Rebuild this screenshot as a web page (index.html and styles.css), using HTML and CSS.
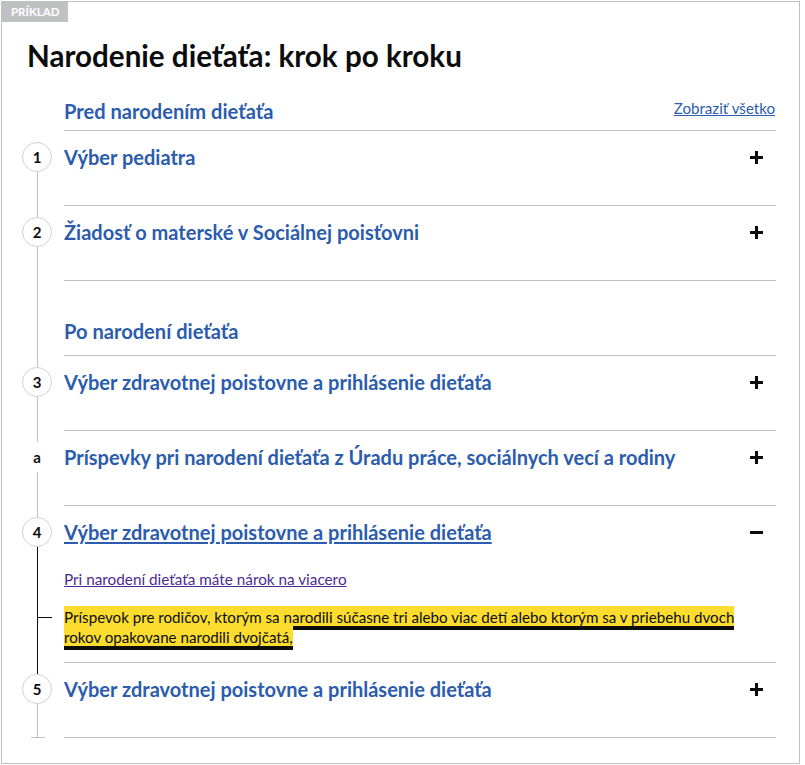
FILE: index.html
```html
<!DOCTYPE html>
<html lang="sk">
<head>
<meta charset="utf-8">
<title>Narodenie dieťaťa: krok po kroku</title>
<link rel="stylesheet" href="styles.css">
</head>
<body>
<div class="example">
  <span class="tag">Príklad</span>
  <h1 class="title">Narodenie dieťaťa: krok po kroku</h1>
  <div class="sbs">
    <div class="row head head-first">
      <div class="rail rail-none"></div>
      <div class="body head-body">
        <h2 class="head-title">Pred narodením dieťaťa</h2>
        <a class="show-all" href="#">Zobraziť všetko</a>
      </div>
    </div>

    <div class="row step">
      <div class="rail rail-start"><span class="marker">1</span></div>
      <div class="body step-body">
        <span class="step-title">Výber pediatra</span>
        <svg class="icon" width="13" height="13" viewBox="0 0 13 13"><rect x="5" y="0" width="3" height="13"/><rect x="0" y="5" width="13" height="3"/></svg>
      </div>
    </div>

    <div class="row step">
      <div class="rail"><span class="marker">2</span></div>
      <div class="body step-body">
        <span class="step-title">Žiadosť o materské v Sociálnej poisťovni</span>
        <svg class="icon" width="13" height="13" viewBox="0 0 13 13"><rect x="5" y="0" width="3" height="13"/><rect x="0" y="5" width="13" height="3"/></svg>
      </div>
    </div>

    <div class="row head">
      <div class="rail rail-full"></div>
      <div class="body head-body head-second">
        <h2 class="head-title">Po narodení dieťaťa</h2>
      </div>
    </div>

    <div class="row step">
      <div class="rail"><span class="marker">3</span></div>
      <div class="body step-body">
        <span class="step-title">Výber zdravotnej poistovne a prihlásenie dieťaťa</span>
        <svg class="icon" width="13" height="13" viewBox="0 0 13 13"><rect x="5" y="0" width="3" height="13"/><rect x="0" y="5" width="13" height="3"/></svg>
      </div>
    </div>

    <div class="row step">
      <div class="rail"><span class="marker marker-plain">a</span></div>
      <div class="body step-body">
        <span class="step-title">Príspevky pri narodení dieťaťa z Úradu práce, sociálnych vecí a rodiny</span>
        <svg class="icon" width="13" height="13" viewBox="0 0 13 13"><rect x="5" y="0" width="3" height="13"/><rect x="0" y="5" width="13" height="3"/></svg>
      </div>
    </div>

    <div class="row step step-open">
      <div class="rail rail-active-below"><span class="marker">4</span></div>
      <div class="body open-body">
        <div class="step-head">
          <a class="step-title step-title-link" href="#">Výber zdravotnej poistovne a prihlásenie dieťaťa</a>
          <svg class="icon" width="13" height="13" viewBox="0 0 13 13"><rect x="0" y="5" width="13" height="3"/></svg>
        </div>
        <a class="visited-link" href="#">Pri narodení dieťaťa máte nárok na viacero</a>
        <p class="para"><a class="focus-link" href="#">Príspevok pre rodičov, ktorým sa narodili súčasne tri alebo viac detí alebo ktorým sa v priebehu dvoch<br>rokov opakovane narodili dvojčatá,</a></p>
      </div>
    </div>

    <div class="row step step-last">
      <div class="rail rail-active-above rail-end"><span class="marker">5</span><span class="tick"></span></div>
      <div class="body step-body body-last">
        <span class="step-title">Výber zdravotnej poistovne a prihlásenie dieťaťa</span>
        <svg class="icon" width="13" height="13" viewBox="0 0 13 13"><rect x="5" y="0" width="3" height="13"/><rect x="0" y="5" width="13" height="3"/></svg>
      </div>
    </div>
  </div>
</div>
</body>
</html>
```
FILE: styles.css
```css
* { box-sizing: border-box; }

body {
  margin: 0;
  font-family: Lato, "Liberation Sans", sans-serif;
  color: #0b0c0c;
  background: #fff;
}

.example {
  margin: 1px 0 0 1px;
  width: 799px;
  height: 763px;
  border: 1px solid #bfc1c3;
}

.tag {
  display: inline-block;
  vertical-align: top;
  background: #bfc1c3;
  color: #fff;
  font-weight: 700;
  font-size: 11.5px;
  line-height: 20px;
  padding: 0 8px 0 9px;
  text-transform: uppercase;
}

.title {
  margin: 16px 0 0 25px;
  font-size: 29.6px;
  line-height: 36px;
  font-weight: 700;
}

.sbs {
  margin: 0 23px 0 20px;
}

.row {
  display: grid;
  grid-template-columns: 42px 1fr;
}

.body {
  border-top: 1px solid #bfc1c3;
}

.head-first .body {
  border-top: 0;
}

.head-body {
  display: flex;
  justify-content: space-between;
  align-items: flex-end;
  padding: 24px 0 7px;
}

.head-second {
  padding: 38px 0 12px;
}

.head-title {
  margin: 0;
  font-size: 20.1px;
  line-height: 24px;
  font-weight: 700;
  color: #2b5cad;
}

.show-all {
  font-size: 15.1px;
  line-height: 20px;
  color: #2b5cad;
  text-decoration: underline;
  margin-bottom: 5px;
  margin-right: 1px;
}

.step-body,
.step-head {
  display: flex;
  align-items: center;
  justify-content: space-between;
}

.step-body {
  padding: 14px 0 36px;
}

.open-body {
  padding: 14px 0 15px;
}

.body-last {
  border-bottom: 1px solid #bfc1c3;
}

.step-title {
  font-size: 20px;
  line-height: 24px;
  font-weight: 700;
  color: #2b5cad;
}

.step-title-link {
  text-decoration: underline;
  text-decoration-thickness: 2px;
  text-underline-offset: 2px;
}

.icon {
  flex: none;
  margin-right: 13px;
  fill: #0b0c0c;
}

.visited-link {
  display: block;
  width: max-content;
  margin-top: 23px;
  font-size: 15.3px;
  line-height: 24px;
  color: #4c2c92;
  text-decoration: underline;
}

.para {
  position: relative;
  margin: 16px 0 0;
  font-size: 15.15px;
  line-height: 20px;
  white-space: nowrap;
}

.para::before {
  content: "";
  position: absolute;
  left: -27px;
  top: 10px;
  width: 15px;
  height: 1px;
  background: #0b0c0c;
}

.focus-link {
  color: #0b0c0c;
  text-decoration: none;
  background: #fcdd2f;
  box-shadow: 0 -2px #fcdd2f, 0 4px #0b0c0c;
}

/* rail with vertical line */
.rail {
  position: relative;
}

.rail::before,
.rail::after {
  content: "";
  position: absolute;
  left: 15px;
  width: 1px;
  background: #bfc1c3;
}

.rail::before {
  top: 0;
  height: 27px;
}

.rail::after {
  top: 27px;
  bottom: 0;
}

.rail-none::before,
.rail-none::after,
.rail-start::before {
  display: none;
}

.rail-active-below::after,
.rail-active-above::before {
  background: #0b0c0c;
}

.marker {
  position: relative;
  z-index: 1;
  display: flex;
  align-items: center;
  justify-content: center;
  width: 30px;
  height: 30px;
  margin-top: 12px;
  border: 1px solid #cfd1d3;
  border-radius: 50%;
  background: #fff;
  font-size: 15px;
  font-weight: 700;
}

.marker-plain {
  border-color: transparent;
}

.tick {
  position: absolute;
  left: 9px;
  bottom: 0;
  width: 14px;
  height: 1px;
  background: #bfc1c3;
}
```
